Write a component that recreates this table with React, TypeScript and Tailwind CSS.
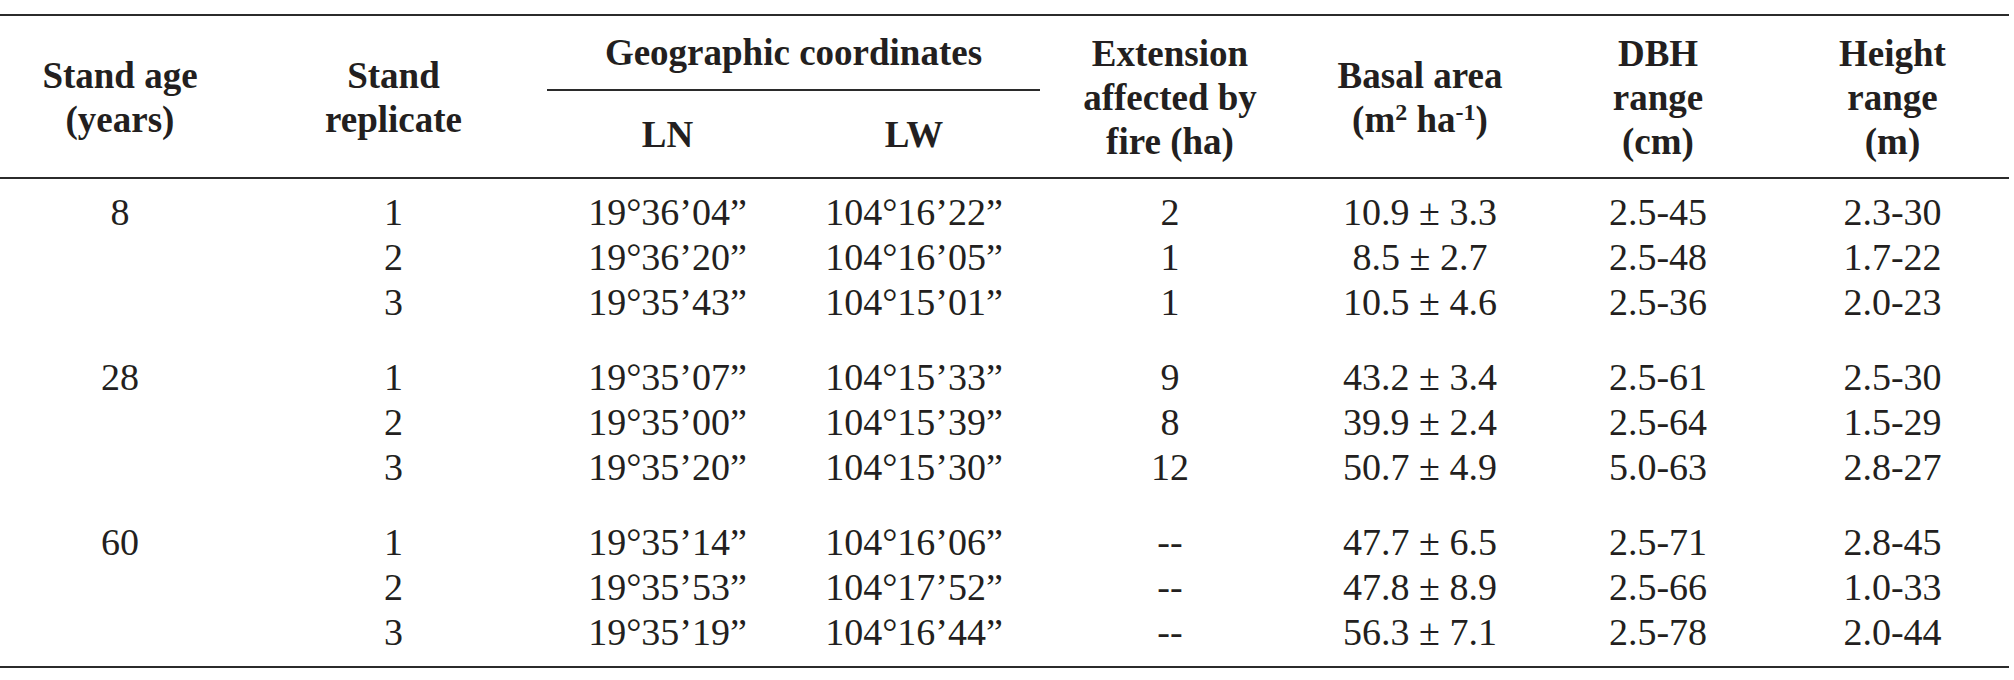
import React from "react";

type Row = {
  age?: string;
  rep: string;
  ln: string;
  lw: string;
  ext: string;
  basal: string;
  dbh: string;
  height: string;
};

const groups: Row[][] = [
  [
    { age: "8", rep: "1", ln: "19°36’04”", lw: "104°16’22”", ext: "2", basal: "10.9 ± 3.3", dbh: "2.5-45", height: "2.3-30" },
    { rep: "2", ln: "19°36’20”", lw: "104°16’05”", ext: "1", basal: "8.5 ± 2.7", dbh: "2.5-48", height: "1.7-22" },
    { rep: "3", ln: "19°35’43”", lw: "104°15’01”", ext: "1", basal: "10.5 ± 4.6", dbh: "2.5-36", height: "2.0-23" },
  ],
  [
    { age: "28", rep: "1", ln: "19°35’07”", lw: "104°15’33”", ext: "9", basal: "43.2 ± 3.4", dbh: "2.5-61", height: "2.5-30" },
    { rep: "2", ln: "19°35’00”", lw: "104°15’39”", ext: "8", basal: "39.9 ± 2.4", dbh: "2.5-64", height: "1.5-29" },
    { rep: "3", ln: "19°35’20”", lw: "104°15’30”", ext: "12", basal: "50.7 ± 4.9", dbh: "5.0-63", height: "2.8-27" },
  ],
  [
    { age: "60", rep: "1", ln: "19°35’14”", lw: "104°16’06”", ext: "--", basal: "47.7 ± 6.5", dbh: "2.5-71", height: "2.8-45" },
    { rep: "2", ln: "19°35’53”", lw: "104°17’52”", ext: "--", basal: "47.8 ± 8.9", dbh: "2.5-66", height: "1.0-33" },
    { rep: "3", ln: "19°35’19”", lw: "104°16’44”", ext: "--", basal: "56.3 ± 7.1", dbh: "2.5-78", height: "2.0-44" },
  ],
];

// column widths measured off the reference, sum = 2009px
const cols = "grid grid-cols-[240px_307px_241px_252px_260px_240px_236px_233px]";

const HeadCell: React.FC<{ className?: string; children: React.ReactNode }> = ({ className = "", children }) => (
  <div className={`row-span-2 flex items-center justify-center text-center ${className}`}>
    <div>{children}</div>
  </div>
);

const App: React.FC = () => {
  return (
    <div className="w-[2014px] h-[680px] bg-white pt-[14px] font-['Liberation_Serif','Times_New_Roman',serif] text-[#231f20]">
      <div className="w-[2009px] border-t-2 border-b-2 border-[#2b2b2b]">
        {/* header */}
        <div className={`${cols} grid-rows-[75px_88px] h-[163px] border-b-2 border-[#2b2b2b] font-bold text-[37px] leading-[44px]`}>
          <HeadCell>
            Stand age
            <br />
            (years)
          </HeadCell>
          <HeadCell>
            Stand
            <br />
            replicate
          </HeadCell>
          <div className="col-span-2 flex items-center justify-center border-b-2 border-[#2b2b2b]">
            Geographic coordinates
          </div>
          <HeadCell>
            Extension
            <br />
            affected by
            <br />
            fire (ha)
          </HeadCell>
          <HeadCell>
            Basal area
            <br />
            (m<sup className="text-[24px]">2</sup> ha<sup className="text-[24px]">-1</sup>)
          </HeadCell>
          <HeadCell>
            DBH
            <br />
            range
            <br />
            (cm)
          </HeadCell>
          <HeadCell>
            Height
            <br />
            range
            <br />
            (m)
          </HeadCell>
          <div className="col-start-3 row-start-2 flex items-center justify-center">LN</div>
          <div className="col-start-4 row-start-2 flex items-center justify-center">LW</div>
        </div>

        {/* body */}
        <div className="flex flex-col gap-[30px] pt-[11px] pb-[11px] text-[38px] leading-[45px]">
          {groups.map((g, gi) => (
            <div key={gi}>
              {g.map((r, ri) => (
                <div key={ri} className={`${cols} h-[45px] text-center whitespace-nowrap`}>
                  <div>{r.age ?? ""}</div>
                  <div>{r.rep}</div>
                  <div>{r.ln}</div>
                  <div>{r.lw}</div>
                  <div>{r.ext}</div>
                  <div>{r.basal}</div>
                  <div>{r.dbh}</div>
                  <div>{r.height}</div>
                </div>
              ))}
            </div>
          ))}
        </div>
      </div>
    </div>
  );
};

export default App;
